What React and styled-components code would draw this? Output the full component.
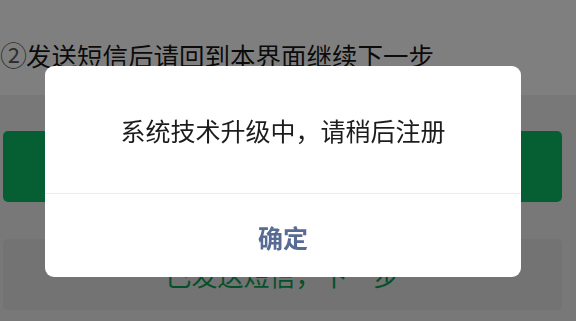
import React from 'react';
import styled, { createGlobalStyle } from 'styled-components';

const GlobalStyle = createGlobalStyle`
  html, body {
    margin: 0;
    padding: 0;
    width: 576px;
    height: 321px;
    overflow: hidden;
    background: #f0f0f0;
    font-family: "Noto Sans CJK SC", "Noto Sans", sans-serif;
  }
`;

export default function App() {
  return (
    <>
      <GlobalStyle />
      <Page>
        <Notice>
          <Tip>
            <Step>②</Step>发送短信后请回到本界面继续下一步
          </Tip>
        </Notice>
        <Actions>
          <Button primary>发送短信</Button>
          <Button>已发送短信，下一步</Button>
        </Actions>
      </Page>
      <Mask />
      <Dialog>
        <DialogBody>系统技术升级中，请稍后注册</DialogBody>
        <DialogFooter>
          <DialogButton>确定</DialogButton>
        </DialogFooter>
      </Dialog>
    </>
  );
}

const Page = styled.div`
  width: 576px;
  height: 321px;
  display: flex;
  flex-direction: column;
  background: #f0f0f0;
`;

const Notice = styled.div`
  height: 95px;
  background: #ffffff;
  box-sizing: border-box;
  padding: 36px 0 0 0;
`;

const Tip = styled.div`
  display: flex;
  align-items: center;
  font-size: 25.5px;
  line-height: 38px;
  color: rgba(0, 0, 0, 0.92);
  white-space: nowrap;
`;

const Step = styled.span`
  font-size: 27px;
  color: rgba(0, 0, 0, 0.65);
  margin-right: -1px;
`;

const Actions = styled.div`
  display: flex;
  flex-direction: column;
  gap: 37px;
  padding: 36px 14px 0 3px;
`;

const Button = styled.div`
  height: 71px;
  border-radius: 5px;
  display: flex;
  align-items: center;
  justify-content: center;
  font-size: 26px;
  background: ${(props) => (props.primary ? '#0dbe66' : '#e6e6e6')};
  color: ${(props) => (props.primary ? '#ffffff' : '#0a9f52')};
`;

const Mask = styled.div`
  position: fixed;
  inset: 0;
  background: rgba(0, 0, 0, 0.5);
`;

const Dialog = styled.div`
  position: fixed;
  left: 45px;
  top: 66px;
  width: 476px;
  height: 211px;
  background: #ffffff;
  border-radius: 9px;
  display: flex;
  flex-direction: column;
  overflow: hidden;
`;

const DialogBody = styled.div`
  height: 128px;
  display: flex;
  align-items: center;
  justify-content: center;
  box-sizing: border-box;
  font-size: 25px;
  color: #1c1c1c;
  border-bottom: 1px solid #ececec;
`;

const DialogFooter = styled.div`
  flex: 1;
  display: flex;
  align-items: center;
  justify-content: center;
`;

const DialogButton = styled.div`
  font-size: 25px;
  font-weight: 700;
  color: #576b95;
  padding-top: 2px;
`;
